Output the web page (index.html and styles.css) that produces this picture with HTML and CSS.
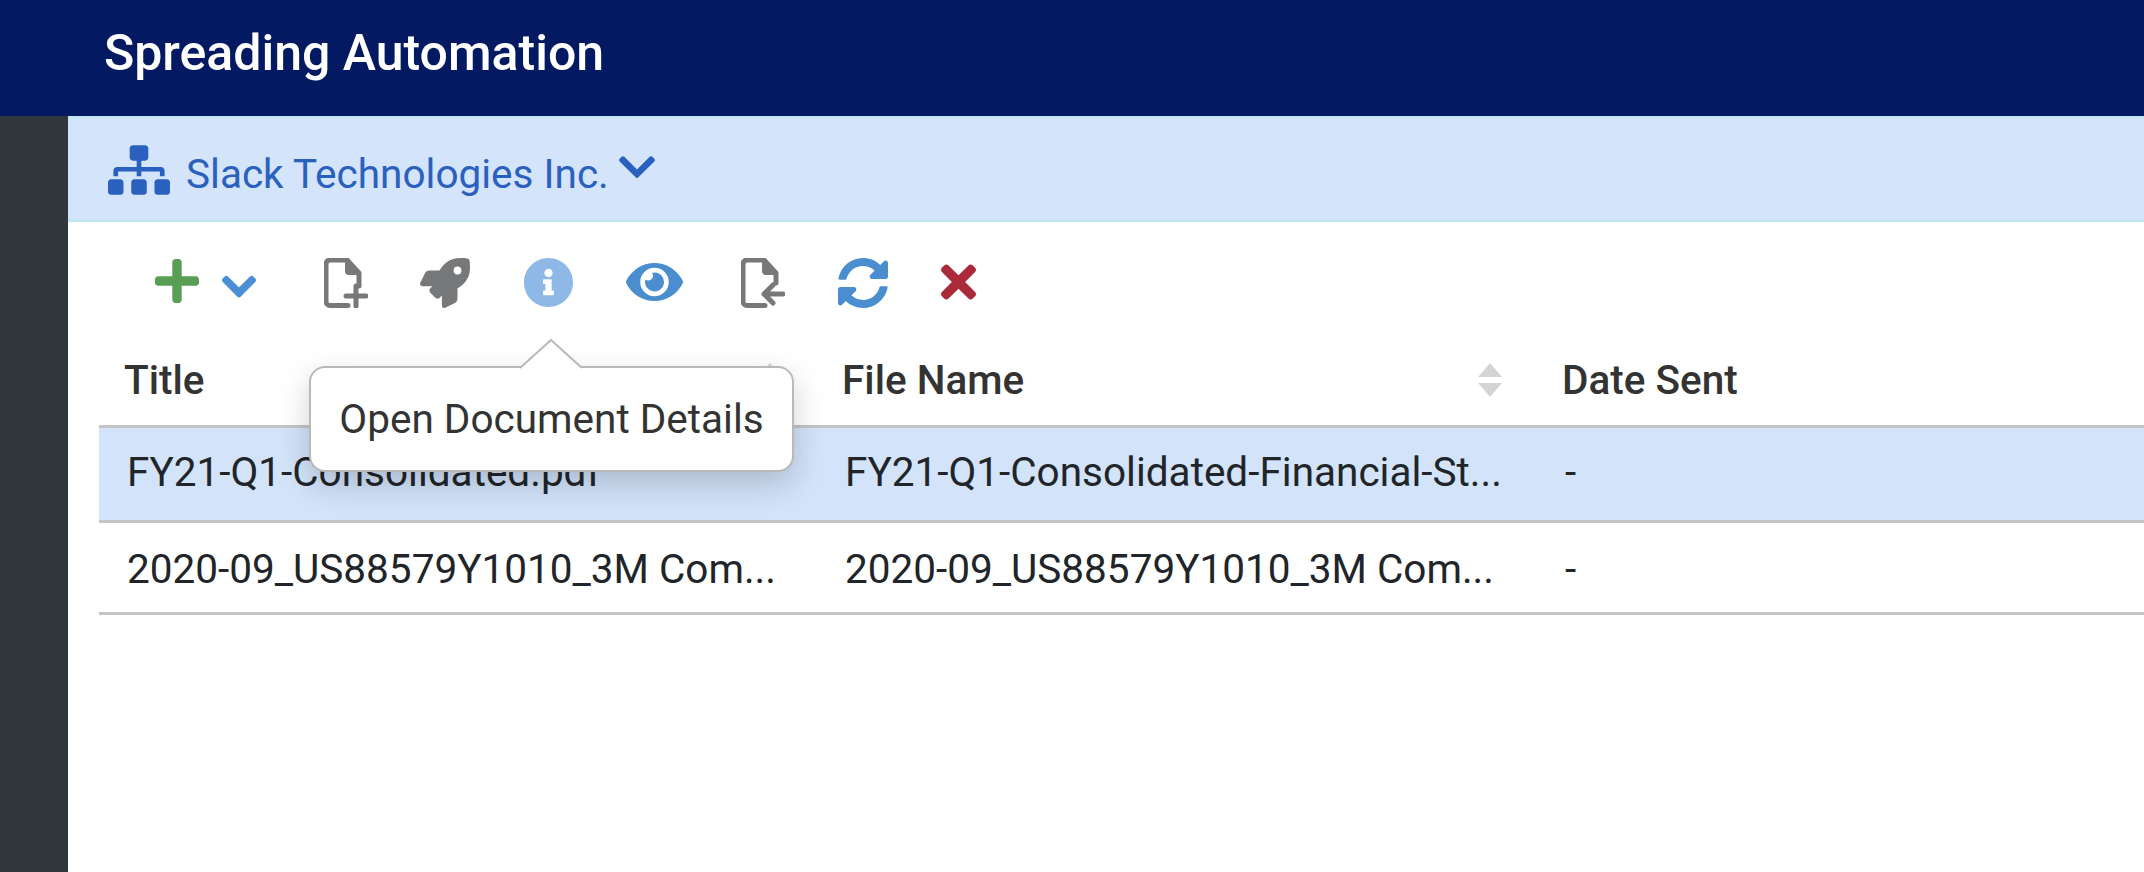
FILE: index.html
```html
<!DOCTYPE html>
<html lang="en">
<head>
    <meta charset="UTF-8">
    <meta name="viewport" content="width=device-width, initial-scale=1.0">
    <title>Spreading Automation</title>
    <link rel="stylesheet" href="styles.css">
</head>
<body>
    <header class="app-header">Spreading Automation</header>
    <div class="app-body">
        <aside class="sidebar"></aside>
        <main class="content">
            <div class="company-bar">
                <svg class="icon-sitemap" viewBox="0 0 640 512"><path d="M128 352H32c-17.67 0-32 14.33-32 32v96c0 17.67 14.33 32 32 32h96c17.67 0 32-14.33 32-32v-96c0-17.67-14.33-32-32-32zm-24-80h192v48h48v-48h192v48h48v-57.59c0-21.17-17.23-38.41-38.41-38.41H344v-64h40c17.67 0 32-14.33 32-32V32c0-17.67-14.33-32-32-32H256c-17.67 0-32 14.33-32 32v96c0 17.67 14.33 32 32 32h40v64H94.41C73.23 224 56 241.23 56 262.41V320h48v-48zm264 80h-96c-17.67 0-32 14.33-32 32v96c0 17.67 14.33 32 32 32h96c17.67 0 32-14.33 32-32v-96c0-17.67-14.33-32-32-32zm240 0h-96c-17.67 0-32 14.33-32 32v96c0 17.67 14.33 32 32 32h96c17.67 0 32-14.33 32-32v-96c0-17.67-14.33-32-32-32z"/></svg>
                <span class="company-name">Slack Technologies Inc.</span>
                <svg class="icon-company-caret" viewBox="-20 100 488 310"><path d="M207.029 381.476L12.686 187.132c-9.373-9.373-9.373-24.569 0-33.941l22.667-22.667c9.357-9.357 24.522-9.375 33.901-.04L224 284.505l154.745-154.021c9.379-9.335 24.544-9.317 33.901.04l22.667 22.667c9.373 9.373 9.373 24.569 0 33.941L240.971 381.476c-9.373 9.372-24.569 9.372-33.942 0z"/></svg>
            </div>

            <div class="toolbar">
                <svg class="tool tool-plus" viewBox="0 32 448 448"><path d="M416 208H272V64c0-17.67-14.33-32-32-32h-32c-17.67 0-32 14.33-32 32v144H32c-17.67 0-32 14.33-32 32v32c0 17.67 14.33 32 32 32h144v144c0 17.67 14.33 32 32 32h32c17.67 0 32-14.33 32-32V304h144c17.67 0 32-14.33 32-32v-32c0-17.67-14.33-32-32-32z"/></svg>
                <svg class="tool tool-caret" viewBox="-20 100 488 310"><path d="M207.029 381.476L12.686 187.132c-9.373-9.373-9.373-24.569 0-33.941l22.667-22.667c9.357-9.357 24.522-9.375 33.901-.04L224 284.505l154.745-154.021c9.379-9.335 24.544-9.317 33.901.04l22.667 22.667c9.373 9.373 9.373 24.569 0 33.941L240.971 381.476c-9.373 9.372-24.569 9.372-33.942 0z"/></svg>
                <svg class="tool tool-doc tool-new" viewBox="0 0 44 50">
                    <path class="doc-line" d="M24 47.500H6a4 4 0 0 1-4-4V6a4 4 0 0 1 4-4h17l12 13v13"/>
                    <path class="doc-fold" d="M21 2v11a4 4 0 0 0 4 4h11v-3L24 2z"/>
                    <path class="doc-line" d="M32 28v20M22 38h20"/>
                </svg>
                <svg class="tool tool-rocket" viewBox="0 0 512 512"><path d="M505.12019,19.09375c-1.18945-5.53125-6.65819-11-12.207-12.1875C460.716,0,435.507,0,410.40747,0,307.17523,0,245.26909,55.20312,199.05238,128H94.83772c-16.34763.01562-35.55658,11.875-42.88664,26.48438L2.51562,253.29688A28.4,28.4,0,0,0,0,264a24.00867,24.00867,0,0,0,24.00582,24H127.81618l-22.47457,22.46875c-11.36521,11.36133-12.99607,32.25781,0,45.25L156.24582,406.625c11.15623,11.1875,32.15619,13.15625,45.27726,0l22.47457-22.46875V488a24.00867,24.00867,0,0,0,24.00581,24,28.55934,28.55934,0,0,0,10.707-2.51562l98.72834-49.39063c14.62888-7.29687,26.50776-26.5,26.50776-42.85937V312.79688c72.59753-46.3125,128.03493-108.40626,128.03493-211.09376C512.07526,76.5,512.07526,51.29688,505.12019,19.09375ZM384.04033,168A40,40,0,1,1,424.05,128,40.02322,40.02322,0,0,1,384.04033,168Z"/></svg>
                <svg class="tool tool-info" viewBox="8 8 496 496"><path d="M256 8C119.043 8 8 119.083 8 256c0 136.997 111.043 248 248 248s248-111.003 248-248C504 119.083 392.957 8 256 8zm0 110c23.196 0 42 18.804 42 42s-18.804 42-42 42-42-18.804-42-42 18.804-42 42-42zm56 254c0 6.627-5.373 12-12 12h-88c-6.627 0-12-5.373-12-12v-24c0-6.627 5.373-12 12-12h12v-64h-12c-6.627 0-12-5.373-12-12v-24c0-6.627 5.373-12 12-12h64c6.627 0 12 5.373 12 12v100h12c6.627 0 12 5.373 12 12v24z"/></svg>
                <svg class="tool tool-eye" viewBox="0 64 576 384"><path d="M572.52 241.4C518.29 135.59 410.93 64 288 64S57.68 135.64 3.48 241.41a32.35 32.35 0 0 0 0 29.19C57.71 376.41 165.07 448 288 448s230.32-71.64 284.52-177.41a32.35 32.35 0 0 0 0-29.19zM288 400a144 144 0 1 1 144-144 143.93 143.93 0 0 1-144 144zm0-240a95.31 95.31 0 0 0-25.31 3.79 47.85 47.85 0 0 1-66.9 66.9A95.78 95.78 0 1 0 288 160z"/></svg>
                <svg class="tool tool-doc tool-import" viewBox="0 0 44 50">
                    <path class="doc-line" d="M24 47.500H6a4 4 0 0 1-4-4V6a4 4 0 0 1 4-4h17l12 13v10"/>
                    <path class="doc-fold" d="M21 2v11a4 4 0 0 0 4 4h11v-3L24 2z"/>
                    <path class="doc-line" d="M42 36H23M32 27l-9 9 9 9"/>
                </svg>
                <svg class="tool tool-sync" viewBox="8 8 496 496"><path d="M370.72 133.28C339.458 104.008 298.888 87.962 255.848 88c-77.458.068-144.328 53.178-162.791 126.85-1.344 5.363-6.122 9.15-11.651 9.15H24.103c-7.498 0-13.194-6.807-11.807-14.176C33.933 94.924 134.813 8 256 8c66.448 0 126.791 26.136 171.315 68.685L463.03 40.97C478.149 25.851 504 36.559 504 57.941V192c0 13.255-10.745 24-24 24H345.941c-21.382 0-32.09-25.851-16.971-40.971l41.75-41.749zM32 296h134.059c21.382 0 32.09 25.851 16.971 40.971l-41.75 41.75c31.262 29.273 71.835 45.319 114.876 45.28 77.418-.07 144.315-53.144 162.787-126.849 1.344-5.363 6.122-9.15 11.651-9.15h57.304c7.498 0 13.194 6.807 11.807 14.176C478.067 417.076 377.187 504 256 504c-66.448 0-126.791-26.136-171.315-68.685L48.97 471.03C33.851 486.149 8 475.441 8 454.059V320c0-13.255 10.745-24 24-24z"/></svg>
                <svg class="tool tool-close" viewBox="0 80 352 352"><path d="M242.72 256l100.07-100.07c12.28-12.28 12.28-32.19 0-44.48l-22.24-22.24c-12.28-12.28-32.19-12.28-44.48 0L176 189.28 75.93 89.21c-12.28-12.28-32.19-12.28-44.48 0L9.21 111.45c-12.28 12.28-12.28 32.19 0 44.48L109.28 256 9.21 356.07c-12.28 12.28-12.28 32.19 0 44.48l22.24 22.24c12.28 12.28 32.2 12.28 44.48 0L176 322.72l100.07 100.07c12.28 12.28 32.2 12.28 44.48 0l22.24-22.24c12.28-12.28 12.28-32.19 0-44.48L242.72 256z"/></svg>
            </div>

            <div class="doc-table">
                <div class="table-row table-head">
                    <div class="cell">Title<span class="sort-arrows"></span></div>
                    <div class="cell">File Name<span class="sort-arrows"></span></div>
                    <div class="cell">Date Sent</div>
                </div>
                <div class="table-row selected">
                    <div class="cell">FY21-Q1-Consolidated.pdf</div>
                    <div class="cell">FY21-Q1-Consolidated-Financial-St...</div>
                    <div class="cell">-</div>
                </div>
                <div class="table-row">
                    <div class="cell">2020-09_US88579Y1010_3M Com...</div>
                    <div class="cell">2020-09_US88579Y1010_3M Com...</div>
                    <div class="cell">-</div>
                </div>
            </div>

            <div class="tooltip">
                <svg class="tooltip-arrow" viewBox="0 0 64 30"><path d="M1 29 32 1 63 29"/></svg>
                Open Document Details
            </div>
        </main>
    </div>
</body>
</html>
```

FILE: styles.css
```css
* {
    box-sizing: border-box;
}
html, body {
    height: 100%;
}
body {
    font-family: Roboto, "Liberation Sans", sans-serif;
    margin: 0;
    background: #fff;
    overflow: hidden;
    display: flex;
    flex-direction: column;
}
svg {
    display: block;
    fill: currentColor;
    flex-shrink: 0;
}

.app-header {
    height: 116px;
    flex-shrink: 0;
    display: flex;
    align-items: center;
    background: #031a63;
    color: #fff;
    font-size: 50px;
    font-weight: 500;
    padding: 0 0 10px 104px;
}
.app-body {
    flex-grow: 1;
    display: flex;
    min-height: 0;
}
.sidebar {
    width: 68px;
    flex-shrink: 0;
    background: #30373d;
}
.content {
    flex-grow: 1;
    position: relative;
}

.company-bar {
    height: 106px;
    display: flex;
    align-items: center;
    padding: 0 0 0 40px;
    background: #d3e4fb;
    border-top: 3px solid #c4e5f2;
    border-bottom: 3px solid #c4e5f2;
    color: #2a60be;
    font-size: 40.5px;
}
.icon-sitemap {
    width: 62px;
    height: 50px;
    margin-top: 1px;
}
.company-name {
    margin: 10px 0 0 16px;
}
.icon-company-caret {
    width: 40px;
    height: 26px;
    margin: -4px 0 0 8px;
}

.toolbar {
    height: 115px;
    display: flex;
    align-items: flex-start;
    padding: 36px 0 0 87px;
}
.tool-plus {
    width: 44px;
    height: 44px;
    margin-top: 1px;
    color: #5a9e55;
}
.tool-caret {
    width: 36px;
    height: 23px;
    margin: 17px 0 0 22px;
    color: #4a8ed4;
    stroke: currentColor;
    stroke-width: 24px;
}
.tool-doc {
    width: 44px;
    height: 50px;
    color: #77787a;
}
.tool-new {
    margin-left: 67px;
}
.tool-import {
    margin-left: 58px;
}
.doc-line {
    fill: none;
    stroke: currentColor;
    stroke-width: 5px;
    stroke-linecap: round;
    stroke-linejoin: round;
}
.tool-rocket {
    width: 50px;
    height: 50px;
    margin-left: 52px;
    color: #77787a;
}
.tool-info {
    width: 49px;
    height: 49px;
    margin-left: 54px;
    color: #8eb8e5;
}
.tool-eye {
    width: 57px;
    height: 38px;
    margin: 5px 0 0 53px;
    color: #4a8ed0;
}
.tool-sync {
    width: 50px;
    height: 50px;
    margin-left: 53px;
    color: #4a8ed0;
}
.tool-close {
    width: 35px;
    height: 36px;
    margin: 6px 0 0 53px;
    color: #ab2a3a;
}

.doc-table {
    margin-left: 31px;
}
.table-row {
    display: grid;
    grid-template-columns: 718px 720px 1fr;
    height: 92px;
    align-items: center;
    padding-top: 2px;
    border-bottom: 3px solid #c4c4c4;
    font-size: 40.5px;
    color: #212529;
}
.table-row .cell {
    padding-left: 28px;
}
.table-row.selected {
    background: #d2e3fa;
    height: 95px;
    padding: 0 0 5px;
}
.table-head {
    height: 91px;
    padding: 0 0 3px;
    font-weight: 500;
    color: #333;
}
.table-head .cell {
    position: relative;
    padding-left: 25px;
}
.sort-arrows {
    position: absolute;
    right: 35px;
    top: 50%;
    width: 24px;
    height: 34px;
    margin-top: -17px;
}
.sort-arrows::before, .sort-arrows::after {
    content: "";
    position: absolute;
    left: 0;
    border-left: 12px solid transparent;
    border-right: 12px solid transparent;
}
.sort-arrows::before {
    top: 0;
    border-bottom: 14px solid #d4d4d4;
}
.sort-arrows::after {
    bottom: 0;
    border-top: 14px solid #d4d4d4;
}

.tooltip {
    position: absolute;
    left: 241px;
    top: 250px;
    width: 485px;
    height: 106px;
    display: flex;
    align-items: center;
    justify-content: center;
    background: #fff;
    border: 2px solid #b9b9b9;
    border-radius: 16px;
    box-shadow: 0 12px 32px rgba(0, 0, 0, 0.18);
    font-size: 40.5px;
    color: #333;
}
.tooltip-arrow {
    position: absolute;
    left: 208px;
    top: -29px;
    width: 64px;
    height: 30px;
    fill: #fff;
    stroke: #b9b9b9;
    stroke-width: 2px;
}
```
